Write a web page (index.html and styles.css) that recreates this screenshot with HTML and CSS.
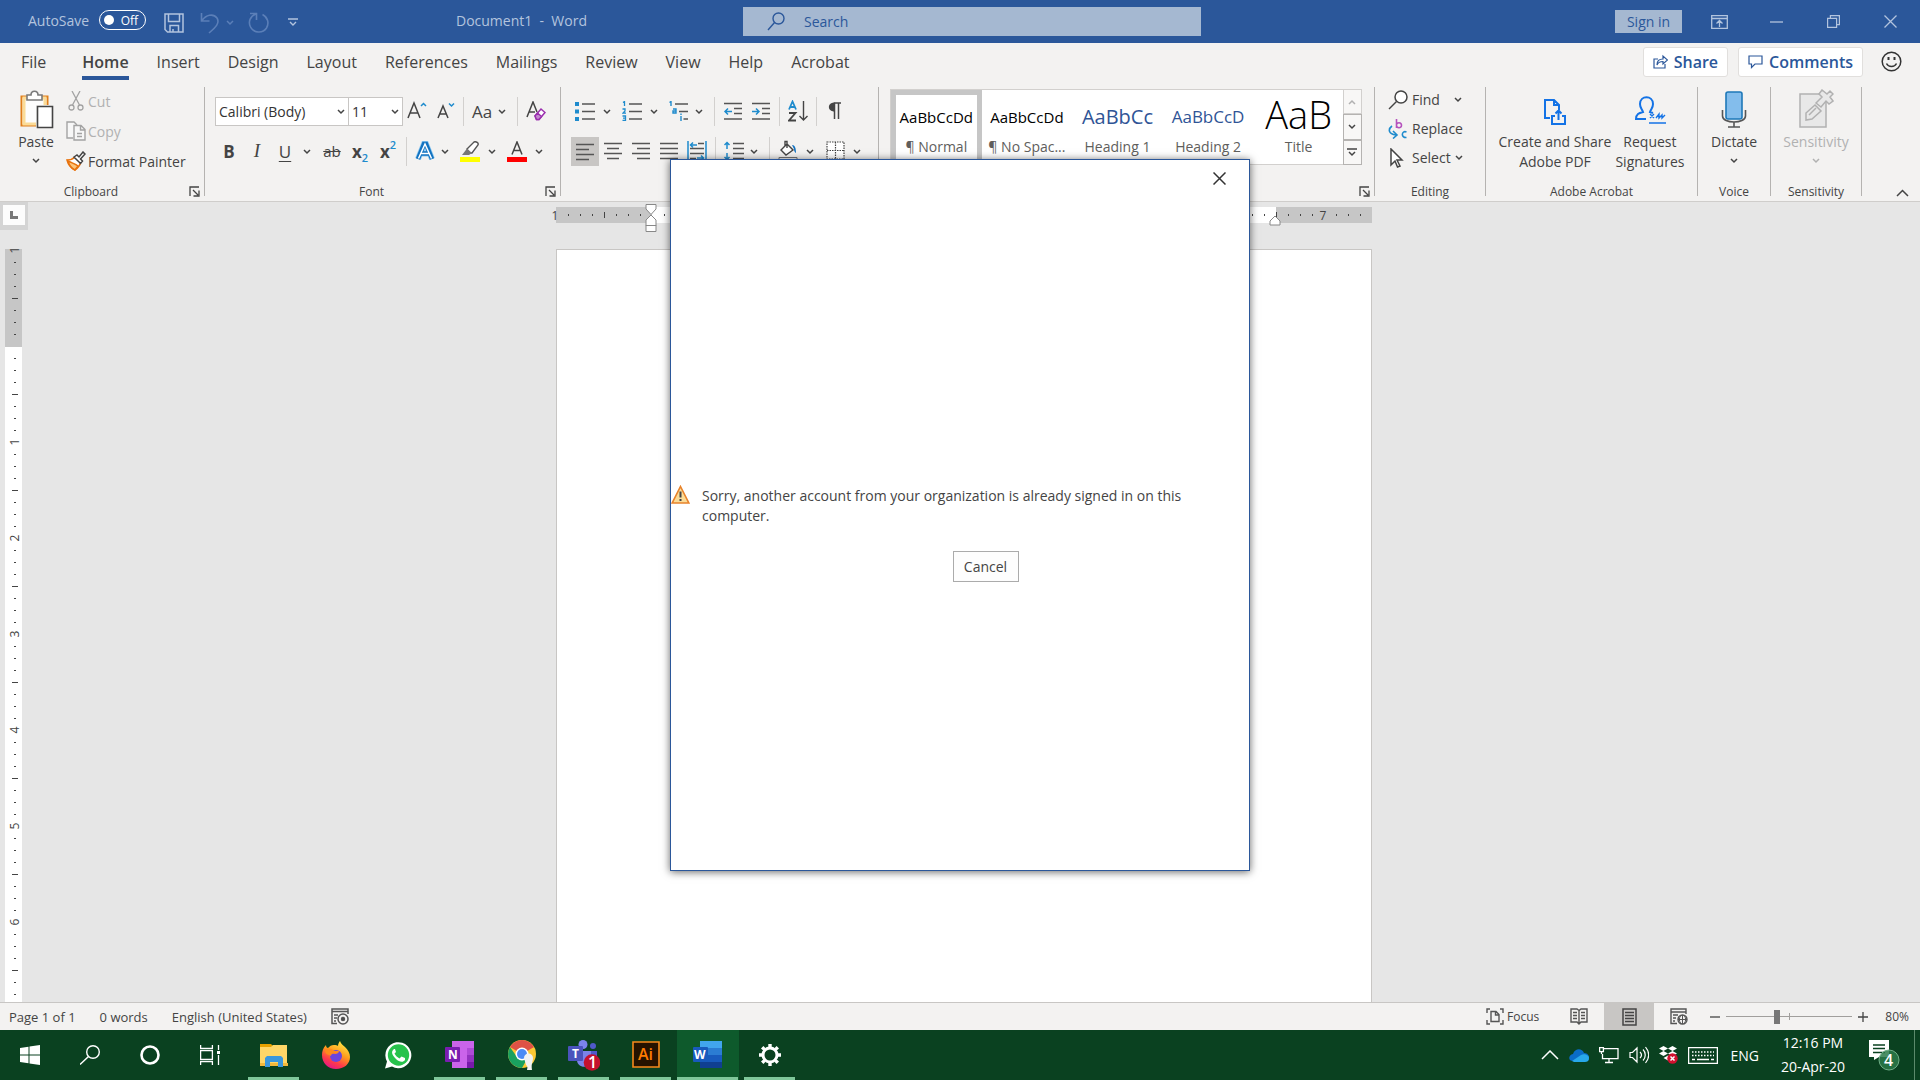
FILE: index.html
```html
<!DOCTYPE html>
<html lang="en">
<head>
<meta charset="utf-8">
<title>Document1 - Word</title>
<link rel="stylesheet" href="styles.css">
</head>
<body>
<svg class="sprite" aria-hidden="true">
  <symbol id="chev" viewBox="0 0 8 6"><path d="M1 1l3 3 3-3" fill="none" stroke="currentColor" stroke-width="1.5"/></symbol>
  <symbol id="launch" viewBox="0 0 11 11"><path d="M1 10V1h9M4 4l5 5M10 4.500v5.500H4.500" fill="none" stroke="currentColor" stroke-width="1.300"/></symbol>
</svg>

<div class="app">
  <header class="titlebar">
    <label class="autosave">AutoSave
      <span class="toggle"><input type="checkbox" role="switch"><span class="knob"></span>Off</span>
    </label>
    <button class="tb save" aria-label="Save"><svg width="20" height="20" viewBox="0 0 20 20" fill="none" stroke="currentColor" stroke-width="1.500"><path d="M1 1h18v18H3.500L1 16.500zM4.500 1v7.500h11V1M6 19v-6.500h8.500V19M9 19v-3"/></svg></button>
    <button class="tb undo" aria-label="Undo"><svg width="20" height="22" viewBox="0 0 20 22" fill="none" stroke="currentColor" stroke-width="1.600"><path d="M1.500 1v8h8M2 8.500C6 3 13 1 17 6c3 5-1 9-8 15"/></svg></button>
    <button class="tb undo-more" aria-label="Undo options"><svg width="8" height="6"><use href="#chev"/></svg></button>
    <button class="tb redo" aria-label="Repeat"><svg width="22" height="22" viewBox="0 0 22 22" fill="none" stroke="currentColor" stroke-width="1.600"><path d="M2 1.500h6.500V8M8 2C2 4 0 10 2.500 15c3 6 12 7 16 1 3-5 1-11-4-13.500"/></svg></button>
    <button class="tb customize" aria-label="Customize toolbar"><svg width="10" height="9" viewBox="0 0 10 9" fill="none" stroke="currentColor" stroke-width="1.400"><path d="M0 1h10M2 4l3 3 3-3"/></svg></button>
    <span class="doc-title">Document1&nbsp; -&nbsp; Word</span>
    <label class="search">
      <svg width="18" height="19" viewBox="0 0 18 19" fill="none" stroke="currentColor" stroke-width="1.400"><circle cx="11.500" cy="6.500" r="5.500"/><path d="M7.500 10.500L1 18"/></svg>
      <input type="text" placeholder="Search" aria-label="Search">
    </label>
    <button class="signin">Sign in</button>
    <div class="window-buttons">
      <button aria-label="Ribbon display options"><svg width="17" height="14" viewBox="0 0 17 14" fill="none" stroke="currentColor" stroke-width="1.300"><path d="M.7.700h15.600v12.600H.7zM.7 3.500h15.600M8.500 12V6M5.500 8.500l3-3 3 3"/></svg></button>
      <button aria-label="Minimize"><svg width="13" height="13" viewBox="0 0 13 13" stroke="currentColor" stroke-width="1.300"><path d="M0 7h13"/></svg></button>
      <button aria-label="Restore"><svg width="13" height="13" viewBox="0 0 13 13" fill="none" stroke="currentColor" stroke-width="1.200"><path d="M.6 3.400h9v9h-9zM3.400 3V.6h9v9H10"/></svg></button>
      <button aria-label="Close"><svg width="13" height="13" viewBox="0 0 13 13" stroke="currentColor" stroke-width="1.300"><path d="M.5.500l12 12M12.500.500l-12 12"/></svg></button>
    </div>
  </header>

  <nav class="tabs">
    <a href="#file" class="file">File</a><a href="#home" class="active">Home</a><a href="#insert">Insert</a><a href="#design">Design</a><a href="#layout">Layout</a><a href="#references">References</a><a href="#mailings">Mailings</a><a href="#review">Review</a><a href="#view">View</a><a href="#help">Help</a><a href="#acrobat">Acrobat</a>
    <div class="tab-actions">
      <button class="pill"><svg width="15" height="15" viewBox="0 0 15 15" fill="none" stroke="currentColor" stroke-width="1.200"><path d="M5 5H1v9h11v-4M4 11c0-4 2-6 6-6V2l4.500 4L10 10V7.500C7 7.500 5 8.500 4 11z"/></svg>Share</button>
      <button class="pill"><svg width="15" height="15" viewBox="0 0 15 15" fill="none" stroke="currentColor" stroke-width="1.200"><path d="M1 2h13v8H7l-3.500 3.500V10H1z"/></svg>Comments</button>
      <button class="smile" aria-label="Feedback"><svg width="21" height="21" viewBox="0 0 21 21" fill="none" stroke="#333" stroke-width="1.500"><circle cx="10.500" cy="10.500" r="9.300"/><path d="M7.500 6v3M13.500 6v3" stroke-width="2"/><path d="M5.500 12.500c2 4 8 4 10 0"/></svg></button>
    </div>
  </nav>

  <div class="ribbon">
    <section class="group clipboard">
      <div class="body">
        <button class="big"><svg width="36" height="40" viewBox="0 0 36 40"><path d="M3.500 7.500h26v29h-26z" fill="#fdfdfd" stroke="#e07f1c" stroke-width="2"/><path d="M6 9h21v26H6z" fill="none" stroke="#fbdc98" stroke-width="3"/><path d="M9 11V6h4c0-5 7-5 7 0h4v5z" fill="#fff" stroke="#7a7a7a" stroke-width="1.600"/><path d="M18 16h18v24H18z" fill="#f3f2f1"/><path d="M19.500 17.500h15v21h-15z" fill="#fff" stroke="#444" stroke-width="1.600"/></svg><span>Paste</span><svg width="8" height="6"><use href="#chev"/></svg></button>
        <div class="stack">
          <button class="line dim"><svg width="20" height="20" viewBox="0 0 20 20" fill="none" stroke="#a3a3a3" stroke-width="1.300"><path d="M6 0l7.500 14M14 0L6.500 14"/><circle cx="5.500" cy="16.500" r="2.500"/><circle cx="14.500" cy="16.500" r="2.500"/></svg>Cut</button>
          <button class="line dim"><svg width="20" height="20" viewBox="0 0 20 20" fill="#f7f7f7" stroke="#a3a3a3" stroke-width="1.400"><path d="M7 17H1V1h7l3 3"/><path d="M8 4.500h7l4 4V19H8zM14.500 4.500V9H19M11 12.500h5M11 15.500h5"/></svg>Copy</button>
          <button class="line"><svg width="20" height="20" viewBox="0 0 20 20" stroke-width="1.500"><path d="M1 9c3 0 6-1 8-3l6 5c-1 3-3 6-6 8C5 17 2 13 1 9z" fill="#fff" stroke="#e8730e"/><path d="M2 10c4 2 8 3 10 5l-3 4C5 17 3 14 2 10z" fill="#fbc57c" stroke="#e8730e"/><path d="M8 6l3-2 2 2 4-5 2 2-4.500 5 2 2-2 2.500z" fill="#fff" stroke="#444"/></svg>Format Painter</button>
        </div>
      </div>
      <footer><span>Clipboard</span><button class="launch" aria-label="Clipboard options"><svg width="11" height="11"><use href="#launch"/></svg></button></footer>
    </section>
    <div class="vsep"></div>

    <section class="group font">
      <div class="rows">
        <div class="row">
          <span class="combo name"><select aria-label="Font"><option>Calibri (Body)</option></select><svg width="8" height="6"><use href="#chev"/></svg></span><span class="combo size"><select aria-label="Font size"><option>11</option></select><svg width="8" height="6"><use href="#chev"/></svg></span>
          <button class="ib" aria-label="Grow font"><svg width="20" height="20" viewBox="0 0 20 20" fill="none" stroke="#444" stroke-width="1.500"><path d="M1 17L7 2l6 15M3 12h8"/><path d="M14 5l2.500-2.500L19 5" stroke="#1e8bcd"/></svg></button>
          <button class="ib" aria-label="Shrink font"><svg width="20" height="20" viewBox="0 0 20 20" fill="none" stroke="#444" stroke-width="1.500"><path d="M3 17L8 5l5 12M5 13h6"/><path d="M14 2.500L16.500 5 19 2.500" stroke="#1e8bcd"/></svg></button>
          <i class="sep"></i>
          <span class="split tight"><button class="ib glyph" aria-label="Change case">Aa</button><button class="ch" aria-label="Case options"><svg width="8" height="6"><use href="#chev"/></svg></button></span>
          <i class="sep"></i>
          <button class="ib" aria-label="Clear formatting"><svg width="20" height="20" viewBox="0 0 20 20" fill="none" stroke="#444" stroke-width="1.500"><path d="M1 16L7 1l4 10M3 11h6"/><path d="M9 15l6-7 4 3.500-6 7h-2.500z" fill="#fff" stroke="#9b2fae"/><path d="M9 15l2.500-3 4 3.500-2.500 3h-2.500z" fill="#c58ad0" stroke="#9b2fae"/></svg></button>
        </div>
        <div class="row">
          <button class="ib glyph bold">B</button>
          <button class="ib glyph italic">I</button>
          <span class="split"><button class="ib glyph under">U</button><button class="ch" aria-label="Underline options"><svg width="8" height="6"><use href="#chev"/></svg></button></span>
          <button class="ib glyph strike">ab</button>
          <button class="ib glyph script"><b>x</b><sub>2</sub></button>
          <button class="ib glyph script"><b>x</b><sup>2</sup></button>
          <i class="sep"></i>
          <span class="split tight"><button class="ib" aria-label="Text effects"><svg width="20" height="20" viewBox="0 0 20 20" fill="none"><path d="M3 18L9 3h2l6 15M6 12.500h8" stroke="#8cc8f0" stroke-width="6"/><path d="M3 18L9 3h2l6 15M6 12.500h8" stroke="#1272c0" stroke-width="4.500"/><path d="M3.500 17.500L10 3l6.500 14.500M6 12.500h8" stroke="#fff" stroke-width="1.500"/></svg></button><button class="ch" aria-label="Effects options"><svg width="8" height="6"><use href="#chev"/></svg></button></span>
          <span class="split"><button class="ib" aria-label="Highlight"><svg width="20" height="21" viewBox="0 0 20 21"><path d="M7 8l7-7c2-1 5 1 4 3l-6 8H9z" fill="#fff" stroke="#555" stroke-width="1.400"/><path d="M7 7.500l5 4.500-3 2H2z" fill="#777"/><path d="M0 16h20v5H0z" fill="#ff0"/></svg></button><button class="ch" aria-label="Highlight colours"><svg width="8" height="6"><use href="#chev"/></svg></button></span>
          <span class="split"><button class="ib" aria-label="Font color"><svg width="20" height="21" viewBox="0 0 20 21"><path d="M5 13.500L10 1l5 12.500M7 9.500h6" fill="none" stroke="#444" stroke-width="1.500"/><path d="M0 16h20v5H0z" fill="#f00"/></svg></button><button class="ch" aria-label="Font colours"><svg width="8" height="6"><use href="#chev"/></svg></button></span>
        </div>
      </div>
      <footer><span>Font</span><button class="launch" aria-label="Font options"><svg width="11" height="11"><use href="#launch"/></svg></button></footer>
    </section>
    <div class="vsep"></div>

    <section class="group paragraph">
      <div class="rows">
        <div class="row">
          <span class="split"><button class="ib" aria-label="Bullets"><svg width="20" height="20" viewBox="0 0 20 20"><path d="M0 1h4v4H0zM0 8.500h4v4H0zM0 16h4v4H0z" fill="#1e8bcd"/><path d="M7 3h13M7 10.500h13M7 18h13" stroke="#555" stroke-width="1.500"/></svg></button><button class="ch" aria-label="Bullet library"><svg width="8" height="6"><use href="#chev"/></svg></button></span>
          <span class="split"><button class="ib" aria-label="Numbering"><svg width="20" height="20" viewBox="0 0 20 20" fill="none"><path d="M1 1.500l1.500-1V5M.5 8h2.500v2L1 12.200h3M.5 15H3.500v4.500H.5M1 17.200h2" stroke="#1e8bcd" stroke-width="1.300"/><path d="M7 3h13M7 10.500h13M7 18h13" stroke="#555" stroke-width="1.500"/></svg></button><button class="ch" aria-label="Numbering library"><svg width="8" height="6"><use href="#chev"/></svg></button></span>
          <span class="split tight"><button class="ib" aria-label="Multilevel list"><svg width="20" height="20" viewBox="0 0 20 20" fill="none"><path d="M.5 1.500l1.500-1V5M4 8h3v4H4v-2h3M12 15v5M12 12.500v1.500" stroke="#1e8bcd" stroke-width="1.400"/><path d="M6 3h13M10 10.500h9M14.500 18H19" stroke="#555" stroke-width="1.500"/></svg></button><button class="ch" aria-label="Multilevel library"><svg width="8" height="6"><use href="#chev"/></svg></button></span>
          <i class="sep"></i>
          <button class="ib" aria-label="Decrease indent"><svg width="20" height="20" viewBox="0 0 20 20" fill="none" stroke="#555" stroke-width="1.500"><path d="M1 2.500h18M11 7.500h8M11 12.500h8M1 18h18"/><path d="M9 10.500H2M5 7.500l-3 3 3 3" stroke="#1e8bcd"/></svg></button>
          <button class="ib" aria-label="Increase indent"><svg width="20" height="20" viewBox="0 0 20 20" fill="none" stroke="#555" stroke-width="1.500"><path d="M1 2.500h18M11 7.500h8M11 12.500h8M1 18h18"/><path d="M1 10.500h7M5 7.500l3 3-3 3" stroke="#1e8bcd"/></svg></button>
          <i class="sep"></i>
          <button class="ib" aria-label="Sort"><svg width="20" height="22" viewBox="0 0 20 22" fill="none" stroke-width="1.800"><path d="M1 9.500l3.500-8 3.500 8M2.300 7h4.500" stroke="#1e8bcd"/><path d="M1 13h6.500L1 20.500h7" stroke="#444"/><path d="M15.500 1v19M11.500 16l4 4 4-4" stroke="#444" stroke-width="1.400"/></svg></button>
          <i class="sep"></i>
          <button class="ib" aria-label="Show marks"><svg width="14" height="18" viewBox="0 0 14 18"><path d="M6 1h7M6.500 1v16M10.500 1v16" stroke="#444" stroke-width="1.500" fill="none"/><path d="M6.500.500C-1 .5-1 9.500 6.500 9.500z" fill="#444"/></svg></button>
        </div>
        <div class="row">
          <button class="ib on" aria-label="Align left"><svg width="18" height="20" viewBox="0 0 18 20" stroke="#555" stroke-width="1.500"><path d="M0 2.500h18M0 7.500h13M0 12.500h18M0 17.500h13"/></svg></button>
          <button class="ib" aria-label="Center"><svg width="18" height="20" viewBox="0 0 18 20" stroke="#555" stroke-width="1.500"><path d="M0 2.500h18M3 7.500h12M0 12.500h18M3 17.500h12"/></svg></button>
          <button class="ib" aria-label="Align right"><svg width="18" height="20" viewBox="0 0 18 20" stroke="#555" stroke-width="1.500"><path d="M0 2.500h18M5 7.500h13M0 12.500h18M5 17.500h13"/></svg></button>
          <button class="ib" aria-label="Justify"><svg width="18" height="20" viewBox="0 0 18 20" stroke="#555" stroke-width="1.500"><path d="M0 2.500h18M0 7.500h18M0 12.500h18M0 17.500h18"/></svg></button>
          <button class="ib" aria-label="Distributed"><svg width="20" height="20" viewBox="0 0 20 20" fill="none" stroke="#555" stroke-width="1.500"><path d="M11 2.500h6M3 7.500h14M3 12.500h14M3 17.500h6"/><path d="M1 0v20M19 0v20M10 4H3M6 1.500L3.500 4 6 6.500M10 17h7M14 14.500l2.500 2.500-2.500 2.500" stroke="#1e8bcd"/></svg></button>
          <i class="sep"></i>
          <span class="split tight"><button class="ib" aria-label="Line spacing"><svg width="20" height="20" viewBox="0 0 20 20" fill="none" stroke="#555" stroke-width="1.500"><path d="M9 2.500h11M9 7.500h11M9 12.500h11M9 17.500h11"/><path d="M3 1v7M.5 4L3 1.500 5.500 4M3 12v7M.5 16L3 18.500 5.500 16" stroke="#1e8bcd"/></svg></button><button class="ch" aria-label="Spacing options"><svg width="8" height="6"><use href="#chev"/></svg></button></span>
          <i class="sep"></i>
          <span class="split"><button class="ib" aria-label="Shading"><svg width="20" height="22" viewBox="0 0 20 22" fill="none"><path d="M9 4l6 6-7 5-5-5zM9 8V1.500H7V6" fill="#fff" stroke="#444" stroke-width="1.400"/><path d="M14 5c3 0 4 3 4 8-2-1-2-4-2-4z" fill="#1272c0"/><path d="M1 17.500h18v4H1z" stroke="#777"/></svg></button><button class="ch" aria-label="Shading colours"><svg width="8" height="6"><use href="#chev"/></svg></button></span>
          <span class="split"><button class="ib" aria-label="Borders"><svg width="19" height="20" viewBox="0 0 19 20" fill="none" stroke="#444" stroke-width="1.200" stroke-dasharray="1.500 1"><path d="M1 1h17v17H1zM9.500 1v17M1 9.500h17" fill="#fff"/><path d="M0 19h19" stroke-dasharray="none"/></svg></button><button class="ch" aria-label="Border options"><svg width="8" height="6"><use href="#chev"/></svg></button></span>
        </div>
      </div>
      <footer><span>Paragraph</span><button class="launch" aria-label="Paragraph options"><svg width="11" height="11"><use href="#launch"/></svg></button></footer>
    </section>
    <div class="vsep"></div>

    <section class="group styles">
      <div class="gallery">
        <button class="style sel"><span class="sample">AaBbCcDd</span><span class="label">¶ Normal</span></button>
        <button class="style"><span class="sample">AaBbCcDd</span><span class="label">¶ No Spac...</span></button>
        <button class="style"><span class="sample h1">AaBbCc</span><span class="label">Heading 1</span></button>
        <button class="style"><span class="sample h2">AaBbCcD</span><span class="label">Heading 2</span></button>
        <button class="style"><span class="sample title">AaB</span><span class="label">Title</span></button>
        <div class="scroller">
          <button disabled aria-label="Previous styles"><svg width="8" height="6" viewBox="0 0 8 6" fill="none" stroke="currentColor" stroke-width="1.500"><path d="M1 5l3-3 3 3"/></svg></button>
          <button aria-label="Next styles"><svg width="8" height="6"><use href="#chev"/></svg></button>
          <button aria-label="More styles"><svg width="10" height="9" viewBox="0 0 10 9" fill="none" stroke="currentColor" stroke-width="1.500"><path d="M0 1h10M2 4l3 3 3-3"/></svg></button>
        </div>
      </div>
      <footer><span>Styles</span><button class="launch" aria-label="Styles options"><svg width="11" height="11"><use href="#launch"/></svg></button></footer>
    </section>
    <div class="vsep"></div>

    <section class="group editing">
      <div class="stack">
        <button class="line"><svg width="20" height="20" viewBox="0 0 20 20" fill="#fff" stroke="#444" stroke-width="1.500"><circle cx="13" cy="7" r="6"/><path d="M8.500 11.500L1 19"/></svg>Find<svg class="far" width="8" height="6"><use href="#chev"/></svg></button>
        <button class="line"><svg width="20" height="20" viewBox="0 0 20 20" fill="none" stroke-width="1.600"><path d="M8.500 0v9M8.500 6c0-3 5-3 5 .300s-5 3-5 .200" stroke="#b552bd"/><path d="M18.500 13c-5-2-6 6 0 5.500M4 7c-4 3-4 8 4 9M5 12l4 4-4 3.500" stroke="#1e8bcd"/></svg>Replace</button>
        <button class="line"><svg width="20" height="20" viewBox="0 0 20 20" fill="#fff" stroke="#444" stroke-width="1.500"><path d="M3 1l11 11H9l3 6-2.500 1L7 13l-4 4z"/></svg>Select<svg class="near" width="8" height="6"><use href="#chev"/></svg></button>
      </div>
      <footer><span>Editing</span></footer>
    </section>
    <div class="vsep"></div>

    <section class="group acrobat">
      <div class="body">
        <button class="big"><svg width="24" height="40" viewBox="0 0 24 40" fill="none" stroke="#1473e6" stroke-width="2"><path d="M7 29H2V11h9l5 5v5M11 11v5h5M12 27H9v8h13v-8h-3M15.500 31V22M12.500 24.500l3-3 3 3"/></svg><span>Create and Share<br>Adobe PDF</span></button>
        <button class="big"><svg width="32" height="40" viewBox="0 0 32 40" fill="none" stroke="#1473e6" stroke-width="2"><path d="M12 30H2c0-5 3-6 7-7-1-3-3-4-3-8 0-9 13-9 13 0 0 4-2 5-3 8l3 1"/><path d="M15 34h17M16 25l4 4M20 25l-4 4M22 29l3-4v4l3-3v3l3-3" stroke-width="1.400"/></svg><span>Request<br>Signatures</span></button>
      </div>
      <footer><span>Adobe Acrobat</span></footer>
    </section>
    <div class="vsep"></div>

    <section class="group voice">
      <div class="body">
        <button class="big"><svg width="26" height="40" viewBox="0 0 26 40" fill="none"><rect x="5" y="3" width="16" height="27" rx="2" fill="#83bdec" stroke="#1e78b8" stroke-width="1.600"/><path d="M1.500 21v6c0 8 23 8 23 0v-6M13 33v5M7 38h12" stroke="#555" stroke-width="1.600"/></svg><span>Dictate</span><svg width="8" height="6"><use href="#chev"/></svg></button>
      </div>
      <footer><span>Voice</span></footer>
    </section>
    <div class="vsep"></div>

    <section class="group sensitivity">
      <div class="body">
        <button class="big dim"><svg width="36" height="40" viewBox="0 0 36 40" fill="#e8e8e8" stroke="#b1b1b1" stroke-width="1.500"><path d="M2 5h26v33H2z"/><path d="M8 24l9-8 6 6-9 8-6 1zM11 26l7-7"/><path d="M18 14l6-6-3-3 3-4 5 4 3-3 3 3-3 3 3 4-4 3-3-3-5 6z"/></svg><span>Sensitivity</span><svg width="8" height="6"><use href="#chev"/></svg></button>
      </div>
      <footer><span>Sensitivity</span></footer>
    </section>
    <div class="vsep"></div>
    <button class="collapse" aria-label="Collapse ribbon"><svg width="13" height="8" viewBox="0 0 13 8" fill="none" stroke="#444" stroke-width="1.500"><path d="M1 7l5.500-5.500L12 7"/></svg></button>
  </div>

  <main class="workspace">
    <aside class="side">
      <div class="tabstop"><span><svg width="8" height="8" viewBox="0 0 8 8"><path d="M1.500 0v6.500H8" fill="none" stroke="#777" stroke-width="3"/></svg></span></div>
      <svg class="vruler" width="17" height="754">
        <defs><pattern id="vt" x="0" y="1" width="17" height="96" patternUnits="userSpaceOnUse"><path d="M9 12.500h2M9 24.500h2M9 36.500h2M7 48.500h6M9 60.500h2M9 72.500h2M9 84.500h2" stroke="#444"/></pattern></defs>
        <rect width="17" height="98" fill="#c6c6c6"/><rect y="98" width="17" height="656" fill="#fff"/><rect width="17" height="754" fill="url(#vt)"/>
        <g class="marks"><text transform="translate(14 1) rotate(-90)">1</text><text transform="translate(14 193) rotate(-90)">1</text><text transform="translate(14 289) rotate(-90)">2</text><text transform="translate(14 385) rotate(-90)">3</text><text transform="translate(14 481) rotate(-90)">4</text><text transform="translate(14 577) rotate(-90)">5</text><text transform="translate(14 673) rotate(-90)">6</text></g>
      </svg>
    </aside>
    <div class="canvas">
      <svg class="hruler" width="818" height="28">
        <defs><pattern id="ht" x="1" y="0" width="96" height="16" patternUnits="userSpaceOnUse"><path d="M12.500 7v2M24.500 7v2M36.500 7v2M48.500 5v6M60.500 7v2M72.500 7v2M84.500 7v2" stroke="#444"/></pattern></defs>
        <rect x="1" width="96" height="16" fill="#c6c6c6"/><rect x="97" width="624" height="16" fill="#fff"/><rect x="721" width="96" height="16" fill="#c6c6c6"/><rect width="812" height="16" fill="url(#ht)"/>
        <g class="marks"><text x="0" y="13">1</text><text x="768" y="13">7</text></g>
        <g fill="#fff" stroke="#888"><path d="M91-2.500h10V2l-5 5.500L91 2z"/><path d="M96 8l5 5v6H91v-6z"/><path d="M91 18.500h10v6H91z"/><path d="M720 9l5 5v4h-10v-4z"/></g>
      </svg>
      <article class="page"></article>
    </div>
  </main>

  <div class="status">
    <span class="pg">Page 1 of 1</span><span class="wc">0 words</span><span class="lang">English (United States)</span>
    <button aria-label="Macro recording"><svg width="18" height="17" viewBox="0 0 18 17" fill="none" stroke="#555" stroke-width="1.500"><path d="M6 15.500H1V1h16v5M1 3.500h16M3 7h4M3 10h3M3 13h2"/><circle cx="12" cy="11" r="5"/><circle cx="12" cy="11" r="1.500" fill="#444"/></svg></button>
    <div class="status-right">
      <button class="focus"><svg width="18" height="17" viewBox="0 0 18 17" fill="none" stroke="#555" stroke-width="1.400"><path d="M4 1H1v4M14 1h3v4M4 16H1v-4M14 16h3v-4M5 3.500h5l3 3v7H5zM9.500 3.500V7H13"/></svg>Focus</button>
      <button class="view read" aria-label="Read mode"><svg width="18" height="17" viewBox="0 0 18 17" fill="none" stroke="#555" stroke-width="1.400"><path d="M9 2.500L7 1H1v13h6l2 2 2-2h6V1h-6zM9 2v14M3 4.500h4M3 7.500h4M3 10.500h4M11 4.500h4M11 7.500h4M11 10.500h4"/></svg></button>
      <button class="view current" aria-label="Print layout"><svg width="15" height="18" viewBox="0 0 15 18" fill="none" stroke="#444" stroke-width="1.500"><path d="M1 1h13v16H1zM3 4.500h9M3 7.500h9M3 10.500h9M3 13.500h9"/></svg></button>
      <button class="view web" aria-label="Web layout"><svg width="18" height="17" viewBox="0 0 18 17" fill="none" stroke="#555" stroke-width="1.400"><path d="M7 15.500H1V1h15v5M1 4h15M3 7h5M3 10h3M3 13h2"/><circle cx="12.500" cy="11.500" r="4.500"/><path d="M8 11.500h9M12.500 7v9M10.500 8c-1.500 2-1.500 5 0 7M14.500 8c1.500 2 1.500 5 0 7" stroke-width="1"/></svg></button>
      <button class="zoom-btn" aria-label="Zoom out"><svg width="10" height="10" viewBox="0 0 10 10" stroke="#444" stroke-width="1.300"><path d="M0 5h10"/></svg></button>
      <input type="range" aria-label="Zoom" min="0" max="100" value="40">
      <button class="zoom-btn" aria-label="Zoom in"><svg width="10" height="10" viewBox="0 0 10 10" stroke="#444" stroke-width="1.300"><path d="M0 5h10M5 0v10"/></svg></button>
      <span class="pct">80%</span>
    </div>
  </div>

  <div class="dialog" role="dialog" aria-label="Sign in">
    <div class="dialog-head"><button aria-label="Close dialog"><svg width="13" height="13" viewBox="0 0 13 13" stroke="#333" stroke-width="1.500"><path d="M.5.500l12 12M12.500.500l-12 12"/></svg></button></div>
    <div class="dialog-body">
      <svg width="19" height="19" viewBox="0 0 19 19"><path d="M9.500 1.500l8.300 16.500H1.200z" fill="#fbdc98" stroke="#e8822a" stroke-width="1.600"/><path d="M9.500 6.500v6M9.500 14v2" stroke="#444" stroke-width="2"/></svg>
      <div class="dialog-text">
        <p>Sorry, another account from your organization is already signed in on this computer.</p>
        <div class="dialog-actions"><button>Cancel</button></div>
      </div>
    </div>
  </div>
</div>

<div class="taskbar">
  <button class="sys" aria-label="Start"><svg width="20" height="20" viewBox="0 0 20 20" fill="#fff"><path d="M0 3l8.500-1.200v7.700H0zM9.500 1.600L20 0v9.500H9.500zM0 10.500h8.500v7.700L0 17zM9.500 10.500H20V20L9.500 18.500z"/></svg></button>
  <button class="sys" aria-label="Search"><svg width="20" height="20" viewBox="0 0 20 20" fill="none" stroke="#fff" stroke-width="1.400"><circle cx="13" cy="7" r="6.300"/><path d="M8.500 11.500L0 19.500"/></svg></button>
  <button class="sys" aria-label="Cortana"><svg width="20" height="20" viewBox="0 0 20 20" fill="none" stroke="#fff" stroke-width="2.600"><circle cx="10" cy="10" r="8.500"/></svg></button>
  <button class="sys" aria-label="Task view"><svg width="20" height="20" viewBox="0 0 20 20" fill="none" stroke="#fff" stroke-width="1.300"><path d="M.6 0v3.500h11.800V0M.6 5.600h11.800v8.800H.6zM.6 20v-3.500h11.800V20M18.500 0v5M18.500 10v10"/><path d="M17 6h3v3h-3z" fill="#fff" stroke="none"/></svg></button>
  <div class="apps">
    <button class="run" aria-label="File Explorer"><svg width="28" height="28" viewBox="0 0 28 28"><path d="M0 3h11l2 2v3H0z" fill="#e6a100"/><path d="M0 6h11l2-2h14v21H0z" fill="#ffd667"/><path d="M0 22h28v3H0z" fill="#f3b93c"/><path d="M5 26V17l2-2h14l2 2v9h-5v-5h-8v5z" fill="#3b97dd"/></svg></button>
    <button aria-label="Firefox"><svg width="28" height="28" viewBox="0 0 28 28"><defs><linearGradient id="fx" x1=".8" y1="0" x2=".3" y2="1"><stop offset="0" stop-color="#fff04a"/><stop offset=".45" stop-color="#ff9a1c"/><stop offset=".75" stop-color="#ff3a4a"/><stop offset="1" stop-color="#e3168a"/></linearGradient></defs><path d="M18 0c1 3 3 4 5 6 3 3 5 6 5 10 0 7-6 12-14 12S0 22 0 14c0-4 1-7 4-10 0 2 1 3 2 3 2-2 3-3 6-3 2 0 3 0 4 1 0-2 1-4 2-5z" fill="url(#fx)"/><circle cx="14" cy="15" r="6" fill="#6b45dd"/><path d="M3 9c4-3 7-1 9 1h5c0 2-2 3-4 3 0 0-4-1-4 2-3-2-6-1-6-6z" fill="#ff8a1c"/></svg></button>
    <button aria-label="WhatsApp"><svg width="28" height="28" viewBox="0 0 28 28"><path d="M1 27.500l2-7A13 13 0 1 1 8 25.500z" fill="#fff"/><circle cx="14.500" cy="14" r="10.700" fill="#27c24c"/><path d="M10 8c-4 3-1 7 2 10s7 4 9 1l0-2-3.500-1.500-2 2c-2-1-4-3-5-5L12 11l-1-3z" fill="#fff"/></svg></button>
    <button class="run" aria-label="OneNote"><svg width="29" height="28" viewBox="0 0 29 28"><path d="M7 0h22v27H7z" fill="#ca64ea"/><path d="M22 7h7v7h-7z" fill="#ae4bd5"/><path d="M22 14h7v7h-7z" fill="#9332bf"/><path d="M22 21h7v6h-7z" fill="#7719aa"/><rect y="6" width="15" height="15" rx="1" fill="#7a1db0"/><text x="3" y="18" class="logo">N</text></svg></button>
    <button class="run" aria-label="Chrome"><svg width="28" height="30" viewBox="0 0 28 30"><circle cx="14" cy="14" r="14" fill="#fcc934"/><path d="M14 14L1.900 7A14 14 0 0 1 26.100 7z" fill="#de5246"/><path d="M1.900 7A14 14 0 0 0 14 28l5-9-10-2z" fill="#1aa15f"/><circle cx="14" cy="14" r="6.500" fill="#fff"/><circle cx="14" cy="14" r="5" fill="#4c8bf5"/><path d="M16 18c0-6 9-6 9 0 0 4-2 5-1 12h-5c1-4 0-4-1-5z" fill="#f2f2f2"/></svg></button>
    <button class="run" aria-label="Teams"><svg width="32" height="31" viewBox="0 0 32 31"><circle cx="15" cy="4.500" r="4.500" fill="#7b83eb"/><circle cx="25" cy="6" r="3" fill="#5059c9"/><path d="M20 11h9v9l-4 4h-5z" fill="#5059c9"/><path d="M9 11h14v9c0 9-14 9-14 0z" fill="#7b83eb"/><rect y="6" width="15" height="15" rx="1" fill="#4b53bc"/><text x="4" y="18" class="logo">T</text><circle cx="24" cy="22.500" r="8.300" fill="#c4112f"/><text x="20" y="28" class="badge">1</text></svg></button>
    <button class="run" aria-label="Illustrator"><svg width="28" height="28" viewBox="0 0 28 28"><path d="M1 1h26v25H1z" fill="#261300" stroke="#f7891b" stroke-width="1.600"/><text x="6" y="19" class="ai">Ai</text></svg></button>
    <button class="run current" aria-label="Word"><svg width="29" height="28" viewBox="0 0 29 28"><path d="M7 0h22v7H7z" fill="#41a5ee"/><path d="M7 7h22v7H7z" fill="#2b7cd3"/><path d="M7 14h22v7H7z" fill="#185abd"/><path d="M7 21h22v6H7z" fill="#103f91"/><rect y="6" width="15" height="15" rx="1" fill="#185abd"/><text x="1" y="18" class="logo">W</text></svg></button>
    <button class="run" aria-label="Settings"><svg width="24" height="24" viewBox="0 0 24 24" fill="none" stroke="#fff"><circle cx="12" cy="12" r="7" stroke-width="3"/><path d="M12 1v3M12 20v3M1 12h3M20 12h3M4.200 4.200l2.200 2.200M17.600 17.600l2.200 2.200M4.200 19.800l2.200-2.200M17.600 6.400l2.200-2.200" stroke-width="3.400"/></svg></button>
  </div>
  <div class="tray">
    <button aria-label="Hidden icons"><svg width="18" height="10" viewBox="0 0 18 10" fill="none" stroke="#fff" stroke-width="1.500"><path d="M1 9l8-8 8 8"/></svg></button>
    <button aria-label="OneDrive"><svg width="20" height="13" viewBox="0 0 20 13"><path d="M4 12C-1 12-1 6 4 5c2-6 9-6 11-1 4 0 5 3 5 4 0 3-1 4-3 4z" fill="#0a6cc8"/><path d="M5 13l-2-1 9-6c3-2 8 0 8 3s-2 4-4 4z" fill="#28a8ea"/></svg></button>
    <button aria-label="Network"><svg width="20" height="17" viewBox="0 0 20 17" fill="none" stroke="#fff" stroke-width="1.300"><path d="M5 1.600h14v10H3.500V7M6 15.500h8M10 12v3.500M.6.600h3.800v4H.6zM2.500 5v2"/></svg></button>
    <button aria-label="Volume"><svg width="20" height="18" viewBox="0 0 20 18" fill="none" stroke="#fff" stroke-width="1.200"><path d="M1 6.500h2.500L8 2v14l-4.500-4.500H1zM11 6c2 2 2 4 0 6M14 3.500c3 3 3 8 0 11M16.500 1c4 5 4 11 0 16"/></svg></button>
    <button aria-label="Dropbox"><svg width="19" height="18" viewBox="0 0 19 18"><path d="M0 2.500L4.500 0 9 2.500 4.500 5zM9 2.500L13.500 0 18 2.500 13.500 5zM0 7.500L4.500 5 9 7.500 4.500 10zM9 7.500L13.500 5 18 7.500 13.500 10zM4.500 12L9 9.500l4.500 2.500L9 14.500z" fill="#fff"/><circle cx="13.500" cy="12.500" r="5.200" fill="#d1112f"/><path d="M11.500 10.500l4 4M15.500 10.500l-4 4" stroke="#fff" stroke-width="1.500"/></svg></button>
    <button aria-label="Touch keyboard"><svg width="30" height="17" viewBox="0 0 30 17" fill="none" stroke="#fff" stroke-width="1.300"><path d="M.6.600h28.800v15.800H.6z"/><path d="M4 5h22M4 8.500h22" stroke-dasharray="1.500 1.500"/><path d="M4 12.500h3M9 12.500h12M23 12.500h3"/></svg></button>
    <button class="lang-btn">ENG</button>
    <button class="clock">12:16 PM<br>20-Apr-20</button>
    <button class="notify" aria-label="Notifications, 4 new"><svg width="31" height="31" viewBox="0 0 31 31"><path d="M0 0h20v17H10l-5 3v-3H0z" fill="#fff"/><path d="M4 5h12M4 8.500h12M4 12.500h12" stroke="#0a4120" stroke-width="1.300"/><circle cx="20" cy="20" r="10" fill="#2c7a4a" fill-opacity=".85" stroke="#6fae86"/><text x="15" y="26" class="badge">4</text></svg></button>
  </div>
</div>
</body>
</html>
```
FILE: styles.css
```css
* { box-sizing: border-box; }
html, body { height: 100%; margin: 0; }
body {
  display: flex;
  flex-direction: column;
  overflow: hidden;
  font-family: "Open Sans", "Noto Sans", sans-serif;
  font-size: 14px;
  color: #444;
  background: #e6e6e6;
}
button {
  display: flex;
  align-items: center;
  justify-content: center;
  padding: 0;
  border: 0;
  background: none;
  font: inherit;
  color: inherit;
}
a { color: inherit; text-decoration: none; }
svg { flex: none; }
.sprite { position: absolute; width: 0; height: 0; }
.app { position: relative; flex: 1; min-height: 0; display: flex; flex-direction: column; }

/* Title bar */
.titlebar {
  display: flex;
  align-items: center;
  height: 43px;
  padding-left: 28px;
  background: #2b579a;
  color: #b3c4de;
}
.autosave { display: flex; align-items: center; gap: 10px; padding-bottom: 3px; width: 136px; }
.toggle {
  position: relative;
  display: flex;
  align-items: center;
  justify-content: flex-end;
  width: 47px;
  height: 20px;
  padding-right: 7px;
  border: 1px solid #fff;
  border-radius: 10px;
  font-size: 12px;
  color: #fff;
}
.toggle input { position: absolute; inset: 0; margin: 0; opacity: 0; }
.knob { width: 10px; height: 10px; margin-right: auto; margin-left: 4px; border-radius: 50%; background: #fff; }
.tb { margin-right: 16px; padding-top: 2px; }
.undo, .undo-more, .redo { color: #5b7fb8; }
.undo { margin-right: 6px; }
.undo-more { margin-right: 14px; }
.redo { margin-right: 18px; }
.doc-title { margin: 0 156px 3px 142px; white-space: nowrap; }
.search {
  display: flex;
  align-items: center;
  gap: 19px;
  flex: 0 1 458px;
  height: 29px;
  padding-left: 24px;
  background: #a5b8d1;
  color: #2b579a;
}
.search input { flex: 1; min-width: 0; padding: 0; border: 0; background: none; font: inherit; }
.search input::placeholder { color: #2b579a; opacity: 1; }
.signin { width: 67px; height: 23px; margin-left: auto; background: #a5b8d1; color: #2b579a; }
.window-buttons { display: flex; padding-left: 9px; padding-right: 1px; }
.window-buttons button { width: 57px; height: 43px; }

/* Tabs */
.tabs { display: flex; height: 37px; padding-left: 21px; background: #f3f2f1; font-size: 16px; }
.tabs a { margin-right: 28px; line-height: 38px; height: 37px; }
.tabs .file { margin-right: 36px; }
.tabs .active { font-weight: 600; border-bottom: 4px solid #2b579a; }
.tab-actions { display: flex; align-items: center; margin-left: auto; padding: 0 18px 0 0; }
.pill {
  gap: 6px;
  height: 30px;
  margin-right: 10px;
  padding: 0 9px;
  border: 1px solid #e1dfdd;
  border-radius: 3px;
  background: #fff;
  color: #2b579a;
  font-weight: 600;
}
.smile { margin-left: 8px; }

/* Ribbon */
.ribbon { display: flex; height: 122px; border-bottom: 1px solid #cfcdcb; background: #f3f2f1; }
.vsep { width: 1px; margin: 7px 0 5px; background: #b5b3b1; }
.group { display: flex; flex-direction: column; justify-content: space-between; min-width: 0; }
.group footer { display: flex; height: 18px; line-height: 18px; font-size: 12px; }
.group footer span { flex: 1; text-align: center; }
.launch { justify-content: flex-end; width: 22px; height: 18px; padding-right: 4px; padding-bottom: 2px; }
.clipboard { flex: 0 0 204px; }
.font { flex: 0 0 355px; }
.paragraph { flex: 0 0 317px; }
.styles { flex: 0 0 495px; }
.editing { flex: 0 0 110px; }
.acrobat { flex: 0 0 211px; }
.voice { flex: 0 0 72px; }
.sensitivity { flex: 0 0 90px; }
.body { display: flex; justify-content: center; }
.clipboard .body { justify-content: flex-start; padding-left: 18px; gap: 10px; }
.acrobat .body { gap: 4px; }
.big { flex-direction: column; justify-content: flex-start; padding-top: 9px; line-height: 20px; }
.big span { margin: 3px 0 6px; }
.clipboard .big { width: 36px; }
.dim { color: #b1b1b1; }
.stack { display: flex; flex-direction: column; padding-top: 6px; }
.line { justify-content: flex-start; gap: 2px; height: 30px; }
.clipboard .stack { padding-left: 2px; }
.editing .stack { padding: 5px 0 0 13px; }
.editing .line { height: 29px; gap: 4px; }
.far { margin-left: 10px; }
.rows { display: flex; flex-direction: column; gap: 11px; padding: 17px 0 0 10px; }
.row { display: flex; height: 29px; }
.ib { width: 28px; height: 28px; }
.on { height: 29px; background: #c8c6c4; }
.ch { width: 12px; height: 29px; }
.split { display: flex; gap: 2px; margin-right: 5px; }
.tight { gap: 0; }
.sep { width: 1px; margin: 0 4px; background: #d2d0ce; }
.glyph { font-size: 17px; }
.bold { font-weight: 700; }
.italic { font-family: "Liberation Serif", serif; font-style: italic; font-size: 19px; }
.under { text-decoration: underline; text-underline-offset: 3px; }
.strike { font-size: 15px; text-decoration: line-through; }
.script sub, .script sup { font-size: 11px; font-weight: 600; color: #1e8bcd; }
.script sub { align-self: flex-end; }
.script sup { align-self: flex-start; }
.combo { position: relative; display: flex; align-items: center; border: 1px solid #c8c6c4; background: #fff; }
.combo select { width: 100%; height: 27px; padding: 0 3px; border: 0; background: none; appearance: none; font: inherit; color: #333; }
.combo svg { position: absolute; right: 3px; pointer-events: none; }
.name { width: 134px; }
.size { width: 55px; margin-left: -1px; }

/* Style gallery */
.gallery { display: flex; height: 76px; margin: 9px 12px 0 11px; border: 1px solid #d2d0ce; background: #fff; }
.style { flex: 1 1 90px; min-width: 0; flex-direction: column; height: 74px; padding: 7px 7px 0; justify-content: flex-start; color: #605e5c; }
.sel { border: 5px solid #c6c6c6; padding: 2px 0 0; }
.sample { width: 100%; height: 40px; overflow: hidden; font-size: 15px; line-height: 40px; color: #000; text-align: center; white-space: nowrap; }
.label { white-space: nowrap; }
.h1 { font-size: 20px; color: #2f5496; }
.h2 { font-size: 17px; color: #2f5496; }
.title { font-size: 38px; line-height: 34px; font-weight: 300; }
.scroller { display: flex; flex: none; flex-direction: column; width: 19px; margin: -1px; }
.scroller button { flex: 1; border: 1px solid #b5b3b1; background: #f8f7f6; }
.scroller button:disabled { border-color: #d2d0ce; color: #b1b1b1; }
.collapse { align-self: flex-end; margin: 0 11px 4px auto; }

/* Document area */
.workspace { flex: 1; min-height: 0; display: flex; overflow: hidden; }
.side { width: 28px; }
.tabstop { height: 28px; padding: 3px; background: #d4d4d4; }
.tabstop span { display: flex; align-items: center; justify-content: center; height: 20px; background: #fcfcfc; }
.vruler { display: block; margin: 19px 0 0 5px; }
.marks text { font-size: 12px; text-anchor: middle; fill: #444; }
.canvas { flex: 1; display: flex; flex-direction: column; align-items: center; padding: 5px 20px 0 0; }
.hruler { overflow: visible; }
.page { flex: 1; width: 816px; margin-top: 14px; border: 1px solid #c8c6c4; border-bottom: 0; background: #fff; }

/* Status bar */
.status {
  display: flex;
  align-items: center;
  height: 28px;
  padding-left: 9px;
  border-top: 1px solid #c8c6c4;
  background: #f3f2f1;
  font-size: 13px;
}
.status > span { margin-right: 24px; }
.status-right { display: flex; align-items: center; margin-left: auto; padding-right: 11px; font-size: 12px; }
.focus { gap: 3px; margin-right: 15px; }
.view { width: 50px; height: 27px; }
.current { background: #c8c6c4; }
.zoom-btn { width: 22px; height: 27px; }
.status input { width: 126px; height: 20px; margin: 0; appearance: none; background: linear-gradient(#a19f9d, #a19f9d) center / 100% 1px no-repeat, linear-gradient(#a19f9d, #a19f9d) center / 1px 7px no-repeat; }
.status input::-webkit-slider-thumb { appearance: none; width: 6px; height: 14px; background: #777; }
.pct { margin-left: 11px; }

/* Dialog */
.dialog {
  position: absolute;
  top: 50%;
  left: 50%;
  translate: -50% -50%;
  display: flex;
  flex-direction: column;
  width: 580px;
  height: 712px;
  border: 1px solid #2b579a;
  background: #fff;
  box-shadow: 0 1px 8px rgba(0, 0, 0, .6);
}
.dialog-head { display: flex; justify-content: flex-end; height: 38px; padding-right: 13px; }
.dialog-head button { width: 33px; height: 36px; }
.dialog-body { flex: 1; display: flex; align-items: center; gap: 12px; }
.dialog-body > svg { margin-bottom: 80px; }
.dialog-text { flex: 1; }
.dialog p { margin: 0 50px 25px 0; line-height: 20px; }
.dialog-actions { display: flex; justify-content: center; padding-left: 20px; }
.dialog-actions button { width: 66px; height: 31px; border: 1px solid #ababab; background: #fdfdfd; }

/* Taskbar */
.taskbar { display: flex; height: 50px; background: #0a4120; color: #fff; }
.sys { width: 60px; }
.apps { display: flex; margin-left: 3px; }
.apps button { width: 62px; border: solid transparent; border-width: 0 6px 0 5px; }
.apps .run { background: linear-gradient(#7fc79a, #7fc79a) bottom / 100% 3px no-repeat content-box; }
.apps .current { border-width: 0 1px 0 0; background: linear-gradient(#7fc79a, #7fc79a) bottom / 100% 3px no-repeat, #0e5a2c; }
.logo { font-size: 12px; font-weight: 700; fill: #fff; }
.ai { font-size: 16px; font-weight: 600; fill: #ff7c00; }
.badge { font-size: 16px; font-weight: 600; fill: #fff; }
.tray { display: flex; align-items: center; gap: 10px; margin-left: auto; padding-right: 5px; }
.lang-btn { margin-left: 3px; }
.clock { width: 88px; line-height: 24px; }
.tray .notify { width: 46px; height: 50px; padding-right: 11px; }
.tray::after { content: ""; width: 1px; height: 50px; margin-left: -9px; background: #5b8a6b; }
```
